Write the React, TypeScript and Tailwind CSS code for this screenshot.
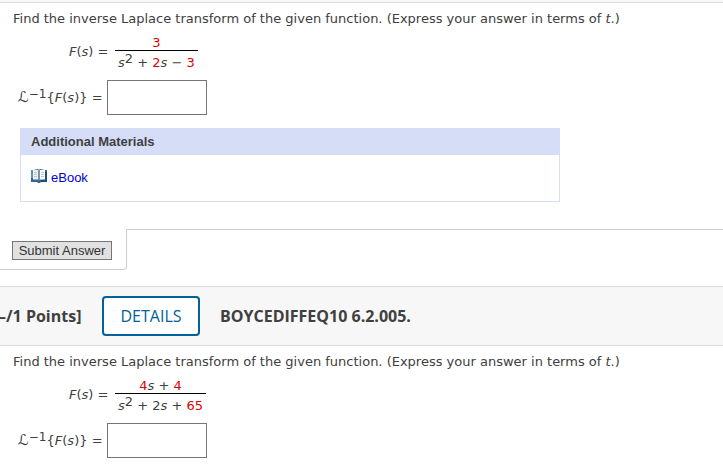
import type { ReactNode } from "react";

const Num = ({ children }: { children: ReactNode }) => <span className="text-[#dd0000]">{children}</span>;

const Squared = () => (
    <>
        <i>s</i>
        <sup className="relative -top-1 align-baseline text-[13px] leading-none">2</sup>
    </>
);

const BookIcon = () => (
    <svg width="16" height="14" viewBox="0 0 16 14" className="mb-1" aria-hidden="true">
        <path d="M0 1h2L7 0l1 1 1-1 5 1h2v12h-6l-1 1H7l-1-1H0z" fill="#2e6798" />
        <path d="M0 1h2v8H0z" fill="#5c94c0" />
        <path d="M14 3h2v10h-6v-2h4z" fill="#1d4c78" />
        <path d="M2 1h5l.5.5V11L6.500 10.500H2z" fill="#f0f0ee" />
        <path d="M9 1h5v9.500H9.500L8.500 11V1.500z" fill="#fff" />
        <path d="M3 3.500h3M3 5.500h3M3 7.500h3M10 3.500h3M10 5.500h3M10 7.500h3" stroke="#c4c4c4" />
        <path d="M7.500 1.500h1V12h-1z" fill="#66788a" />
    </svg>
);

type QuestionProps = {
    id: string;
    numerator: ReactNode;
    denominator: ReactNode;
};

const Question = ({ id, numerator, denominator }: QuestionProps) => (
    <section className="pt-1.5 text-[13px] leading-5">
        <p className="pl-[13px]">
            Find the inverse Laplace transform of the given function. (Express your answer in terms of <i>t</i>.)
        </p>

        <div className="mt-[7px] flex items-start gap-[5px] pl-[69px]">
            <span className="w-[41px] leading-8 whitespace-nowrap">
                <i>F</i>(<i>s</i>) =
            </span>
            <span className="inline-flex flex-col text-center">
                <span className="border-b border-black px-[3px] leading-[14px]">{numerator}</span>
                <span className="px-[3px] leading-6">{denominator}</span>
            </span>
        </div>

        <div className="mt-[5px] flex items-center gap-[5px] pl-[18px]">
            <label htmlFor={id} className="w-[84px] whitespace-nowrap">
                <i className="text-[15px]">ℒ</i>
                <sup className="relative -top-1 align-baseline text-[12px] leading-none">−1</sup>
                {"{"}
                <i>F</i>(<i>s</i>){"}"} =
            </label>
            <input id={id} type="text" className="h-[35px] w-[100px] border border-[#767676] bg-white px-1" />
        </div>
    </section>
);

export default function App() {
    return (
        <main className="overflow-x-hidden bg-white font-['Verdana','DejaVu_Sans',sans-serif] text-[#404040]">
            <div className="h-[3px] border-b border-[#dddddd] bg-[#f7f7f7]" />

            <Question
                id="answer-1"
                numerator={<Num>3</Num>}
                denominator={
                    <>
                        <Squared /> + <Num>2</Num><i>s</i> − <Num>3</Num>
                    </>
                }
            />

            <section className="mt-[13px] ml-5 max-w-[540px] border border-[#d6ddf7] font-['Liberation_Sans',sans-serif] text-[13px]">
                <h2 className="bg-[#d6ddf7] px-2.5 leading-[26px] font-bold">Additional Materials</h2>
                <div className="h-[46px] px-2.5 pt-[13px]">
                    <a href="#ebook" className="inline-flex items-center gap-1 leading-5 text-[#0000cc]">
                        <BookIcon />
                        eBook
                    </a>
                </div>
            </section>

            <div className="mt-[27px] flex">
                <div className="h-[41px] w-[127px] rounded-br border-r border-b border-[#cccccc] pt-3 pl-3">
                    <button
                        type="button"
                        className="block h-[19px] w-[100px] border border-[#767676] bg-[#e1e1e1] font-['Liberation_Sans',sans-serif] text-[13px] leading-[17px] whitespace-nowrap text-[#333333]"
                    >
                        Submit Answer
                    </button>
                </div>
                <div className="flex-1 border-t border-[#cccccc]" />
            </div>

            <header className="mt-4 flex h-[60px] items-center border-y border-[#dddddd] bg-[#f7f7f7] font-['Open_Sans',sans-serif] text-base">
                <span className="-ml-0.5 w-[104px] shrink-0 font-bold whitespace-nowrap">–/1 Points]</span>
                <button type="button" className="h-10 w-[98px] rounded border-2 border-[#006298] bg-white text-[#006298]">
                    DETAILS
                </button>
                <span className="ml-5 font-bold">BOYCEDIFFEQ10 6.2.005.</span>
            </header>

            <Question
                id="answer-2"
                numerator={
                    <>
                        <Num>4</Num><i>s</i> + <Num>4</Num>
                    </>
                }
                denominator={
                    <>
                        <Squared /> + 2<i>s</i> + <Num>65</Num>
                    </>
                }
            />
        </main>
    );
}
